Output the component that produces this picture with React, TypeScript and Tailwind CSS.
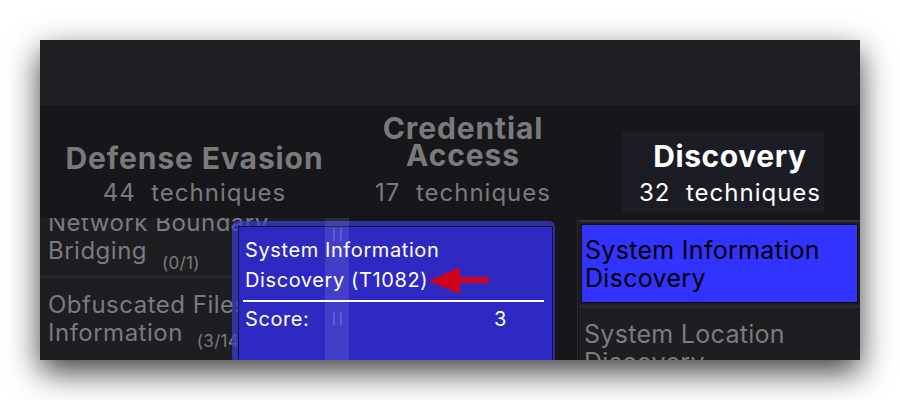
import React from 'react';

const font = { fontFamily: 'Inter, "Noto Sans", sans-serif' };

const Grip = () => (
  <div className="flex gap-[5px] justify-center">
    <span className="block w-[2px] h-[13px] bg-[#5a5ae6]" />
    <span className="block w-[2px] h-[13px] bg-[#5a5ae6]" />
  </div>
);

export default function App() {
  return (
    <div className="w-[900px] h-[400px] bg-white p-10" style={font}>
      <div className="relative w-[820px] h-[320px] overflow-hidden bg-[#17171b] shadow-[0_12px_30px_rgba(0,0,0,0.75)]">
        {/* top toolbar band */}
        <div className="h-[65px] bg-[#1e1e23]" />

        {/* tactic headers */}
        <div className="grid grid-cols-[309px_228px_1fr] h-[113px] items-end">
          <div className="flex flex-col items-center pb-[11px] text-[#7a7a7a]">
            <div className="text-[30px] font-bold leading-[30px] tracking-[0.9px] mb-[6px]">Defense Evasion</div>
            <div className="text-[24px] leading-[28px] tracking-[1px] whitespace-pre">44  techniques</div>
          </div>
          <div className="flex flex-col items-center pb-[11px] text-[#7a7a7a]">
            <div className="text-[30px] font-bold leading-[27px] text-center tracking-[0.9px] mb-[10px]">Credential<br />Access</div>
            <div className="text-[24px] leading-[28px] tracking-[1px] whitespace-pre">17  techniques</div>
          </div>
          <div className="flex justify-center pl-[9px] pb-[5px]">
            <div className="w-[202px] h-[81px] bg-[#1c1c25] flex flex-col items-center pt-[9px] pl-[14px] text-white">
              <div className="text-[30px] font-bold leading-[30px] tracking-[0.6px] mb-[8px]">Discovery</div>
              <div className="text-[24px] leading-[28px] tracking-[1px] whitespace-pre">32  techniques</div>
            </div>
          </div>
        </div>

        {/* technique cells */}
        <div className="grid grid-cols-[285px_252px_1fr] h-[142px] overflow-hidden">
          <div className="flex flex-col gap-[3px] bg-[#27272b] -mt-[15px]">
            <div className="bg-[#1e1e22] px-[8px] pt-[6px] pb-[8px] text-[#7b7b7b] text-[24px] leading-[28px] tracking-[0.5px]">
              <div className="whitespace-nowrap">Network Boundary</div>
              <div>
                Bridging<span className="text-[17px] tracking-[0.3px] ml-[15px] relative top-[10px]">(0/1)</span>
              </div>
            </div>
            <div className="flex-1 bg-[#1e1e22] px-[8px] pt-[13px] text-[#7b7b7b] text-[24px] leading-[28px] tracking-[0.5px]">
              <div className="whitespace-nowrap">Obfuscated Files or</div>
              <div>
                Information<span className="text-[17px] tracking-[0.3px] ml-[14px] relative top-[6px]">(3/14)</span>
              </div>
            </div>
          </div>
          <div />
          <div className="flex flex-col pl-[1px] border-l border-[#2a2a2e] pt-[2px]">
            <div className="h-[2px] bg-[#333338]" />
            <div className="bg-[#1e1e22] p-[2px]">
              <div className="bg-[#3333ff] border border-[#111] h-[79px] px-[3px] pt-[11px] text-black text-[25px] leading-[28px] tracking-[0.3px]">
                System Information<br />Discovery
              </div>
            </div>
            <div className="h-[3px] bg-[#27272b]" />
            <div className="flex-1 bg-[#1e1e22] px-[5px] pt-[12px] text-[#7b7b7b] text-[25px] leading-[28px] tracking-[0.3px]">
              System Location<br />Discovery
            </div>
          </div>
        </div>

        {/* tooltip */}
        <div className="absolute left-[192px] top-[181px] w-[323px] h-[142px] rounded-[6px] bg-[#3b3bd6]/70 pl-[6px] pt-[5px] pr-[2px]">
          <div className="h-full bg-[#2e29c2] border border-[#15153a] px-[6px] pt-[8px] text-white text-[20px] leading-[30px] tracking-[0.6px]">
            <div>System Information</div>
            <div className="flex items-center">
              <span>Discovery (T1082)</span>
              <svg width="60" height="27" viewBox="0 0 60 27" className="ml-[1px]">
                <polygon points="0,14 31,0 31,10 60,10 60,16 31,16 31,27" fill="#d0021b" />
              </svg>
            </div>
            <div className="h-[2px] bg-white -ml-[2px] mr-[2px] mt-[5px]" />
            <div className="flex pt-[2px]">
              <span className="w-[249px]">Score:</span>
              <span>3</span>
            </div>
          </div>
        </div>

        {/* collapse strip */}
        <div className="absolute left-[285px] top-[178px] w-[24px] h-[142px] bg-white/10 flex flex-col pt-[10px] gap-[71px]">
          <Grip />
          <Grip />
        </div>
      </div>
    </div>
  );
}
